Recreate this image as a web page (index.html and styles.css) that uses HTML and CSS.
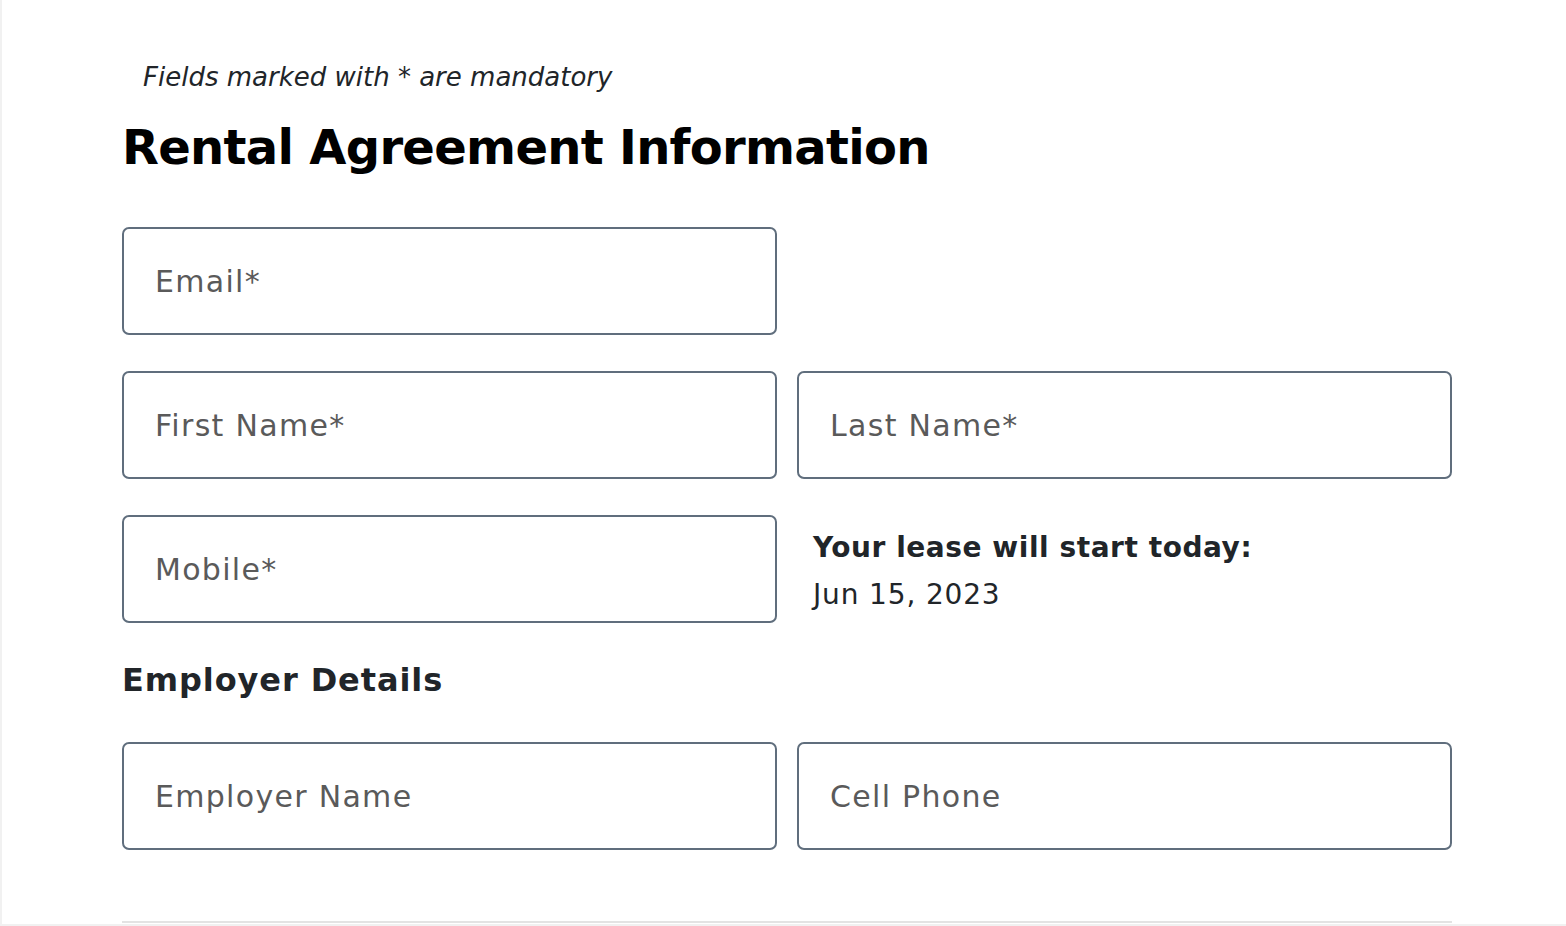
FILE: index.html
```html
<!DOCTYPE html>
<html lang="en">
<head>
<meta charset="utf-8">
<title>Rental Agreement Information</title>
<link rel="stylesheet" href="styles.css">
</head>
<body>
<div class="page">
  <form class="form">
    <p class="note">Fields marked with * are mandatory</p>
    <h1 class="title">Rental Agreement Information</h1>
    <div class="grid">
      <input class="field" type="email" placeholder="Email*">
      <div></div>
      <input class="field" type="text" placeholder="First Name*">
      <input class="field" type="text" placeholder="Last Name*">
      <input class="field" type="tel" placeholder="Mobile*">
      <div class="lease">
        <div class="lease-label">Your lease will start today:</div>
        <div class="lease-date">Jun 15, 2023</div>
      </div>
    </div>
    <h2 class="subtitle">Employer Details</h2>
    <div class="grid">
      <input class="field" type="text" placeholder="Employer Name">
      <input class="field" type="tel" placeholder="Cell Phone">
    </div>
    <div class="divider"></div>
  </form>
</div>
</body>
</html>
```
FILE: styles.css
```css
html, body {
  margin: 0;
  padding: 0;
}
body {
  background: #f1f1f1;
  font-family: "DejaVu Sans", "Noto Sans", sans-serif;
  color: #212529;
  height: 926px;
  overflow: hidden;
}
.page {
  margin-left: 2px;
  background: #ffffff;
  height: 924px;
  overflow: hidden;
}
.form {
  width: 1330px;
  margin-left: 120px;
  padding-top: 61px;
}
.note {
  margin: 0 0 0 21px;
  font-size: 26px;
  line-height: 32px;
  font-style: italic;
  color: #212529;
}
.title {
  margin: 26px 0 0 0;
  font-size: 48px;
  line-height: 56px;
  font-weight: 700;
  letter-spacing: -0.7px;
  color: #000000;
}
.grid {
  display: grid;
  grid-template-columns: 655px 655px;
  column-gap: 20px;
  row-gap: 36px;
  margin-top: 52px;
}
.field {
  box-sizing: border-box;
  height: 108px;
  width: 100%;
  margin: 0;
  border: 2px solid #606e7d;
  border-radius: 7px;
  padding: 0 0 0 31px;
  background: #ffffff;
  font-family: "DejaVu Sans", "Noto Sans", sans-serif;
  font-size: 30px;
  letter-spacing: 1.3px;
  color: #212529;
  outline: none;
}
.field::placeholder {
  color: #5a5a5a;
  opacity: 1;
}
.lease {
  padding: 9px 0 0 16px;
}
.lease-label {
  font-size: 28px;
  line-height: 47px;
  font-weight: 700;
  letter-spacing: 0.55px;
  color: #212529;
}
.lease-date {
  font-size: 28px;
  line-height: 47px;
  letter-spacing: 0.85px;
  color: #212529;
}
.subtitle {
  margin: 38px 0 0 0;
  font-size: 32px;
  line-height: 38px;
  font-weight: 700;
  letter-spacing: 0.9px;
  color: #212529;
}
.subtitle + .grid {
  margin-top: 43px;
}
.divider {
  margin-top: 71px;
  height: 2px;
  background: #e3e3e3;
}
```
